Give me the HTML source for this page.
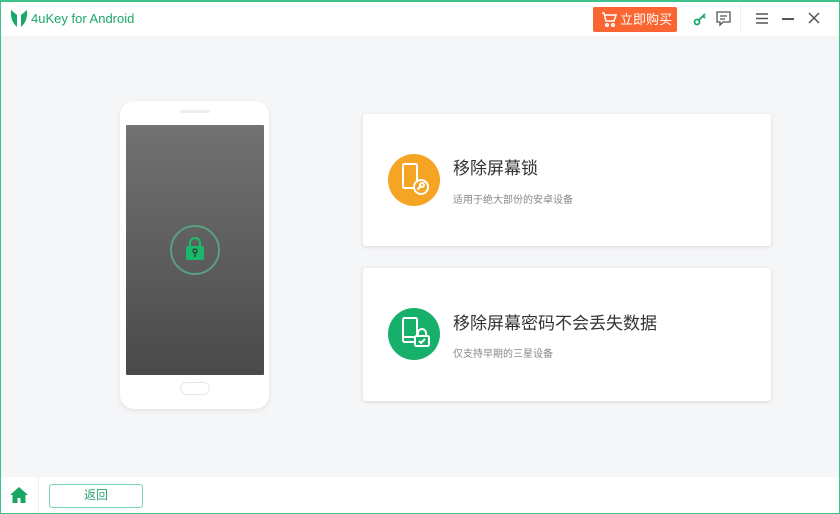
<!DOCTYPE html>
<html><head><meta charset="utf-8"><style>
*{margin:0;padding:0;box-sizing:border-box}
body{width:840px;height:514px;overflow:hidden;font-family:"Liberation Sans","Noto Sans CJK SC",sans-serif;background:#fff;position:relative}
.frame{position:absolute;inset:0;border:1px solid #3cc28a;border-top-width:2px;pointer-events:none;z-index:9}
.top{position:absolute;left:0;top:0;width:840px;height:36px;background:#fff}
.main{position:absolute;left:0;top:36px;width:840px;height:441px;background:#f5f6f8}
.foot{position:absolute;left:0;top:477px;width:840px;height:37px;background:#fff}
.card{position:absolute;left:363px;width:408px;background:#fff;box-shadow:0 1px 4px rgba(0,0,0,.12);border-radius:3px}
.ic{position:absolute;left:25px;width:52px;height:52px;border-radius:50%}
.t{position:absolute;left:90px;font-size:17px;color:#333}
.s{position:absolute;left:90px;font-size:10px;color:#888}
</style></head><body>
<div class="top">
 <svg style="position:absolute;left:10px;top:9px" width="18" height="19" viewBox="0 0 18 19"><path d="M1 1 Q0 12 7 18 L7 6 Z" fill="#1aa86a"/><path d="M17 1 Q18 12 11 18 L11 6 Z" fill="#1aa86a"/></svg>
 <div style="position:absolute;left:31px;top:11px;font-size:13px;color:#1aa86a">4uKey for Android</div>
 <div style="position:absolute;left:593px;top:7px;width:84px;height:25px;background:#fb6531;border-radius:2px;color:#fff;font-size:13px;line-height:25px;padding-left:27px">立即购买</div>
 <svg style="position:absolute;left:601px;top:12px" width="16" height="15" viewBox="0 0 16 15" fill="none" stroke="#fff" stroke-width="1.5"><path d="M1 1h2l2 8h8l2-6H4"/><circle cx="6" cy="13" r="1.3"/><circle cx="12" cy="13" r="1.3"/></svg>
 <svg style="position:absolute;left:693px;top:11px" width="14" height="15" viewBox="0 0 14 15" fill="none" stroke="#1aa86a" stroke-width="1.8"><circle cx="4" cy="11" r="2.5"/><path d="M6 9 L12 3 M10 5 L12 7"/></svg>
 <svg style="position:absolute;left:716px;top:11px" width="15" height="16" viewBox="0 0 15 16" fill="none" stroke="#555" stroke-width="1.3"><path d="M1 1h13v10H7l-3 3v-3H1z"/><path d="M4 5h7M4 8h5"/></svg>
 <div style="position:absolute;left:740px;top:5px;width:1px;height:28px;background:#eee"></div>
 <svg style="position:absolute;left:756px;top:13px" width="12" height="11" viewBox="0 0 12 11" stroke="#555" stroke-width="1.5"><path d="M0 1h12M0 5.5h12M0 10h12"/></svg>
 <div style="position:absolute;left:782px;top:18px;width:12px;height:1.5px;background:#555"></div>
 <svg style="position:absolute;left:808px;top:12px" width="12" height="12" viewBox="0 0 12 12" stroke="#555" stroke-width="1.5"><path d="M1 1l10 10M11 1L1 11"/></svg>
</div>
<div class="main">
 <div style="position:absolute;left:120px;top:65px;width:149px;height:308px;background:#fff;border-radius:14px;box-shadow:0 2px 6px rgba(0,0,0,.08)"></div>
 <div style="position:absolute;left:180px;top:74px;width:30px;height:3px;background:#eee;border-radius:2px"></div>
 <div style="position:absolute;left:126px;top:89px;width:138px;height:250px;background:linear-gradient(#727272,#4a4a4a);border-radius:1px"></div>
 <div style="position:absolute;left:180px;top:346px;width:30px;height:13px;border:1px solid #e6e6e6;border-radius:7px"></div>
 <div style="position:absolute;left:170px;top:189px;width:50px;height:50px;border:2.5px solid #5a9f80;border-radius:50%"></div>
 <svg style="position:absolute;left:185px;top:201px" width="20" height="24" viewBox="0 0 20 24"><path d="M5 10V6a5 5 0 0 1 10 0v4" fill="none" stroke="#1ab86a" stroke-width="2.2"/><rect x="1" y="9" width="18" height="14" rx="2" fill="#1ab86a"/><circle cx="10" cy="14" r="2" fill="none" stroke="#333" stroke-width="1.2"/><path d="M10 16v4" stroke="#333" stroke-width="1.2"/></svg>
 <div class="card" style="top:78px;height:132px">
  <div class="ic" style="top:40px;background:#f5a424"></div>
  <svg style="position:absolute;left:38px;top:49px" width="30" height="34" viewBox="0 0 30 34" fill="none" stroke="#fff" stroke-width="2"><rect x="2" y="1" width="14" height="24" rx="1.5"/><circle cx="20" cy="24" r="7" fill="#f5a424"/><circle cx="21" cy="22" r="2"/><path d="M19.5 23.5l-3 3"/></svg>
  <div class="t" style="top:40px">移除屏幕锁</div>
  <div class="s" style="top:77px">适用于绝大部份的安卓设备</div>
 </div>
 <div class="card" style="top:232px;height:133px">
  <div class="ic" style="top:40px;background:#16b06a"></div>
  <svg style="position:absolute;left:38px;top:49px" width="30" height="34" viewBox="0 0 30 34" fill="none" stroke="#fff" stroke-width="2"><rect x="2" y="1" width="14" height="24" rx="1.5"/><path d="M2 20h14"/><rect x="14" y="19" width="14" height="10" rx="1.5" fill="#16b06a"/><path d="M17 19v-3a4 4 0 0 1 8 0v3"/><path d="M18 24l2 2 4-4"/></svg>
  <div class="t" style="top:41px">移除屏幕密码不会丢失数据</div>
  <div class="s" style="top:77px">仅支持早期的三星设备</div>
 </div>
</div>
<div class="foot">
 <div style="position:absolute;left:38px;top:0;width:1px;height:37px;background:#eee"></div>
 <svg style="position:absolute;left:10px;top:10px" width="18" height="16" viewBox="0 0 18 16"><path d="M9 0L0 8h2.5v8h5v-5h3v5h5V8H18z" fill="#17a663"/></svg>
 <div style="position:absolute;left:49px;top:7px;width:94px;height:24px;border:1.5px solid #7dd4ad;border-radius:3px;text-align:center;line-height:21px;font-size:12px;color:#2aa66f">返回</div>
</div>
<div class="frame"></div>
</body></html>
